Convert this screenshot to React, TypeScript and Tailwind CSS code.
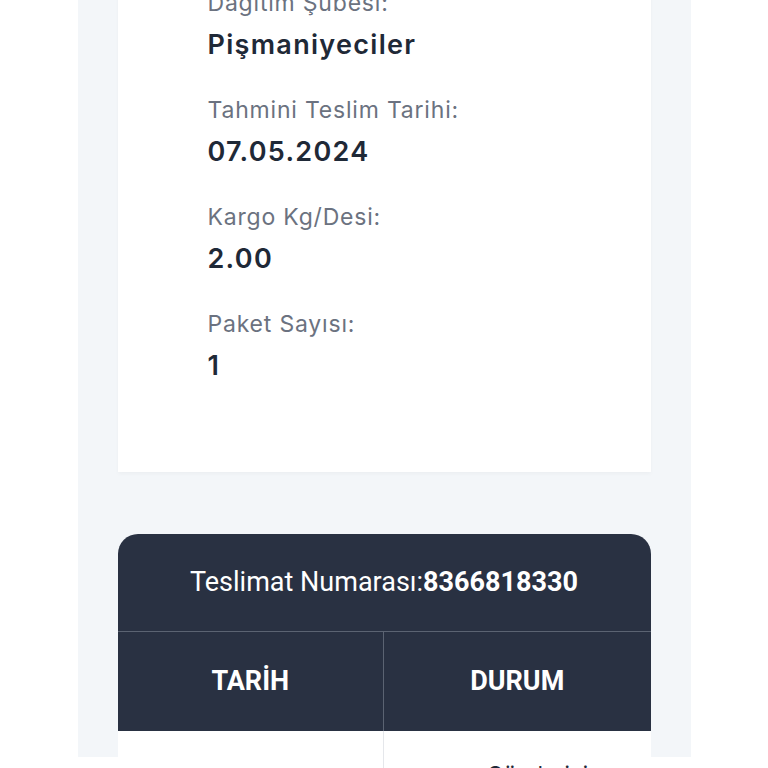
import React from "react";

const items = [
  { label: "Dağıtım Şubesi:", value: "Pişmaniyeciler" },
  { label: "Tahmini Teslim Tarihi:", value: "07.05.2024" },
  { label: "Kargo Kg/Desi:", value: "2.00" },
  { label: "Paket Sayısı:", value: "1" },
];

export default function App() {
  return (
    <div className="w-full h-[768px] overflow-hidden bg-white" style={{ fontFamily: "Inter, 'Noto Sans', sans-serif" }}>
      <div className="mx-auto w-[613px] h-full bg-[#f3f6f9] px-[40px]">
        <div className="bg-white pl-[90px] pb-[90px] shadow-[0_2px_4px_rgba(0,0,0,0.03)]">
          <div className="flex flex-col gap-[35px] -mt-[11px] pt-0">
            {items.map((it) => (
              <div key={it.label} className="flex flex-col gap-[12px]">
                <div className="text-[23px] leading-[28px] tracking-[0.8px] text-[#6b7280]">{it.label}</div>
                <div className="text-[27px] leading-[32px] tracking-[1.3px] font-semibold text-[#1f2937]">{it.value}</div>
              </div>
            ))}
          </div>
        </div>

        <div className="mt-[62px] rounded-t-[20px] overflow-hidden" style={{ fontFamily: "Roboto, 'Noto Sans', sans-serif" }}>
          <div className="bg-[#293142] h-[98px] flex items-center justify-center border-b border-[#5b6372] text-white text-[27px]">
            <span>Teslimat Numarası:</span>
            <span className="font-bold">8366818330</span>
          </div>
          <div className="bg-[#293142] h-[99px] grid grid-cols-2 text-white text-[27px] font-bold">
            <div className="flex items-center justify-center border-r border-[#5b6372]">TARİH</div>
            <div className="flex items-center justify-center">DURUM</div>
          </div>
          <div className="bg-white grid grid-cols-2 h-[200px]">
            <div className="border-r border-[#e5e7eb]"></div>
            <div className="pt-[29px] pl-[103px] text-[22px] leading-[28px] text-[#1f2937]" style={{ fontFamily: "Inter, sans-serif" }}>
              Gönderiniz
            </div>
          </div>
        </div>
      </div>
    </div>
  );
}
